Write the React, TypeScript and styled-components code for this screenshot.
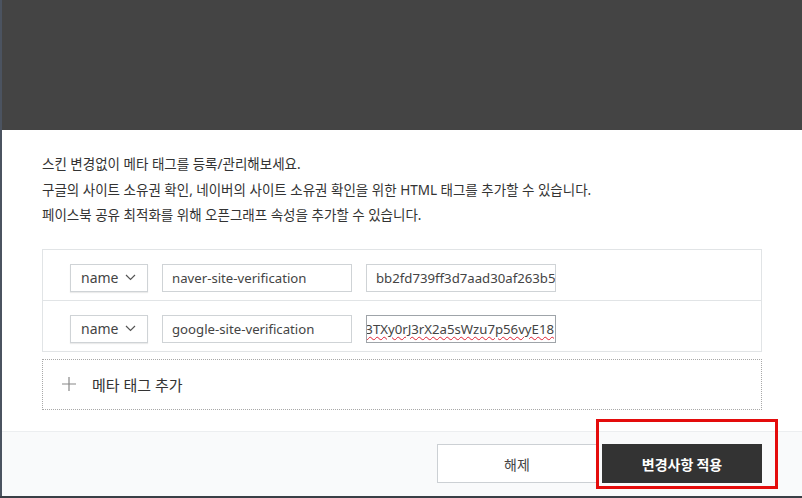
import React from "react"
import styled, { createGlobalStyle } from "styled-components"

const GlobalStyle = createGlobalStyle`
    html, body {
        margin: 0;
        padding: 0;
        width: 802px;
        height: 498px;
        overflow: hidden;
        background: #3b4048;
    }
    body {
        font-family: "Noto Sans", "Noto Sans CJK KR", sans-serif;
        color: #333;
    }
`

const metaTags = [
    { attr: "name", key: "naver-site-verification", value: "bb2fd739ff3d7aad30af263b5", focused: false },
    { attr: "name", key: "google-site-verification", value: "3TXy0rJ3rX2a5sWzu7p56vyE18", focused: true },
]

const ChevronDown = () => (
    <svg width="11" height="7" viewBox="0 0 11 7" fill="none">
        <path d="M1 1l4.5 4.5L10 1" stroke="#555" strokeWidth="1.2" />
    </svg>
)

const PlusIcon = () => (
    <svg width="14" height="14" viewBox="0 0 14 14" fill="none">
        <path d="M7 0v14M0 7h14" stroke="#888" strokeWidth="1.2" />
    </svg>
)

export default function App() {
    return <Screen>
        <GlobalStyle />
        <Frame>
            <SideStrip />
            <Column>
                <Backdrop />
                <ModalBody>
                    <Description>
                        <p>스킨 변경없이 메타 태그를 등록/관리해보세요.</p>
                        <p>구글의 사이트 소유권 확인, 네이버의 사이트 소유권 확인을 위한 HTML 태그를 추가할 수 있습니다.</p>
                        <p>페이스북 공유 최적화를 위해 오픈그래프 속성을 추가할 수 있습니다.</p>
                    </Description>
                    <TagTable>
                        {metaTags.map((tag) => (
                            <TagRow key={tag.key}>
                                <AttrSelect>
                                    <span>{tag.attr}</span>
                                    <ChevronDown />
                                </AttrSelect>
                                <TextField>{tag.key}</TextField>
                                <TextField focused={tag.focused}>
                                    {tag.focused ? <Misspelled>{tag.value}</Misspelled> : tag.value}
                                </TextField>
                            </TagRow>
                        ))}
                    </TagTable>
                    <AddRow>
                        <PlusIcon />
                        <span>메타 태그 추가</span>
                    </AddRow>
                </ModalBody>
                <Footer>
                    <Button>해제</Button>
                    <Highlighted>
                        <Button primary>변경사항 적용</Button>
                        <RedMark />
                    </Highlighted>
                </Footer>
            </Column>
        </Frame>
        <BottomStrip />
    </Screen>
}

const Screen = styled.div`
    width: 802px;
    height: 498px;
    display: flex;
    flex-direction: column;
`

const Frame = styled.div`
    flex: 1;
    display: flex;
    min-height: 0;
`

const SideStrip = styled.div`
    width: 2px;
    background: #4b5360;
`

const Column = styled.div`
    flex: 1;
    display: flex;
    flex-direction: column;
`

const Backdrop = styled.div`
    height: 130px;
    background: #444444;
`

const ModalBody = styled.div`
    height: 301px;
    box-sizing: border-box;
    background: #fff;
    padding: 22px 40px 0 40px;
`

const Description = styled.div`
    font-size: 13.5px;
    line-height: 25.5px;
    color: #333;
    margin-bottom: 20px;
    p {
        margin: 0;
    }
`

const TagTable = styled.div`
    border: 1px solid #e1e4e6;
    width: 720px;
    box-sizing: border-box;
`

const TagRow = styled.div`
    height: 50px;
    box-sizing: border-box;
    display: flex;
    align-items: flex-start;
    gap: 14px;
    padding: 14px 0 0 27px;
    & + & {
        border-top: 1px solid #e1e4e6;
        height: 51px;
    }
`

const AttrSelect = styled.div`
    width: 78px;
    height: 28px;
    box-sizing: border-box;
    border: 1px solid #cfd3d6;
    box-shadow: 0 1px 1px rgba(0, 0, 0, 0.08);
    display: flex;
    align-items: center;
    justify-content: space-between;
    padding: 0 11px 0 10px;
    font-size: 14px;
    color: #444;
`

const TextField = styled.div<{ focused?: boolean }>`
    width: 190px;
    height: 28px;
    box-sizing: border-box;
    border: 1px solid ${({ focused }) => (focused ? "#9fa4a9" : "#cfd3d6")};
    display: flex;
    align-items: center;
    justify-content: ${({ focused }) => (focused ? "flex-end" : "flex-start")};
    padding: ${({ focused }) => (focused ? "0 1px 0 0" : "0 0 0 9px")};
    overflow: hidden;
    white-space: nowrap;
    font-size: 13.2px;
    color: #444;
`

const Misspelled = styled.span`
    text-decoration: underline wavy #d23;
    text-decoration-thickness: 1px;
    text-underline-offset: 2px;
`

const AddRow = styled.div`
    margin-top: 7px;
    width: 720px;
    height: 51px;
    box-sizing: border-box;
    border: 1px dotted #a8a8a8;
    display: flex;
    align-items: center;
    gap: 16px;
    padding-left: 19px;
    font-size: 15px;
    color: #333;
`

const Footer = styled.div`
    flex: 1;
    background: #f9fafb;
    border-top: 1px solid #eceef0;
    display: flex;
    justify-content: flex-end;
    align-items: flex-start;
    padding: 12px 40px 0 0;
    gap: 5px;
`

const Button = styled.button<{ primary?: boolean }>`
    width: 160px;
    height: 39px;
    box-sizing: border-box;
    border: 1px solid ${({ primary }) => (primary ? "#333" : "#ccd0d4")};
    background: ${({ primary }) => (primary ? "#333" : "#fff")};
    color: ${({ primary }) => (primary ? "#fff" : "#444")};
    font-family: "Noto Sans CJK KR", "Noto Sans", sans-serif;
    font-size: 14px;
    font-weight: ${({ primary }) => (primary ? 700 : 400)};
    cursor: pointer;
`

const Highlighted = styled.div`
    position: relative;
`

const RedMark = styled.div`
    position: absolute;
    left: -6px;
    top: -25px;
    width: 182px;
    height: 70px;
    box-sizing: border-box;
    border: 3px solid #e40c0c;
    pointer-events: none;
`

const BottomStrip = styled.div`
    height: 2px;
    background: #3a3f46;
`
